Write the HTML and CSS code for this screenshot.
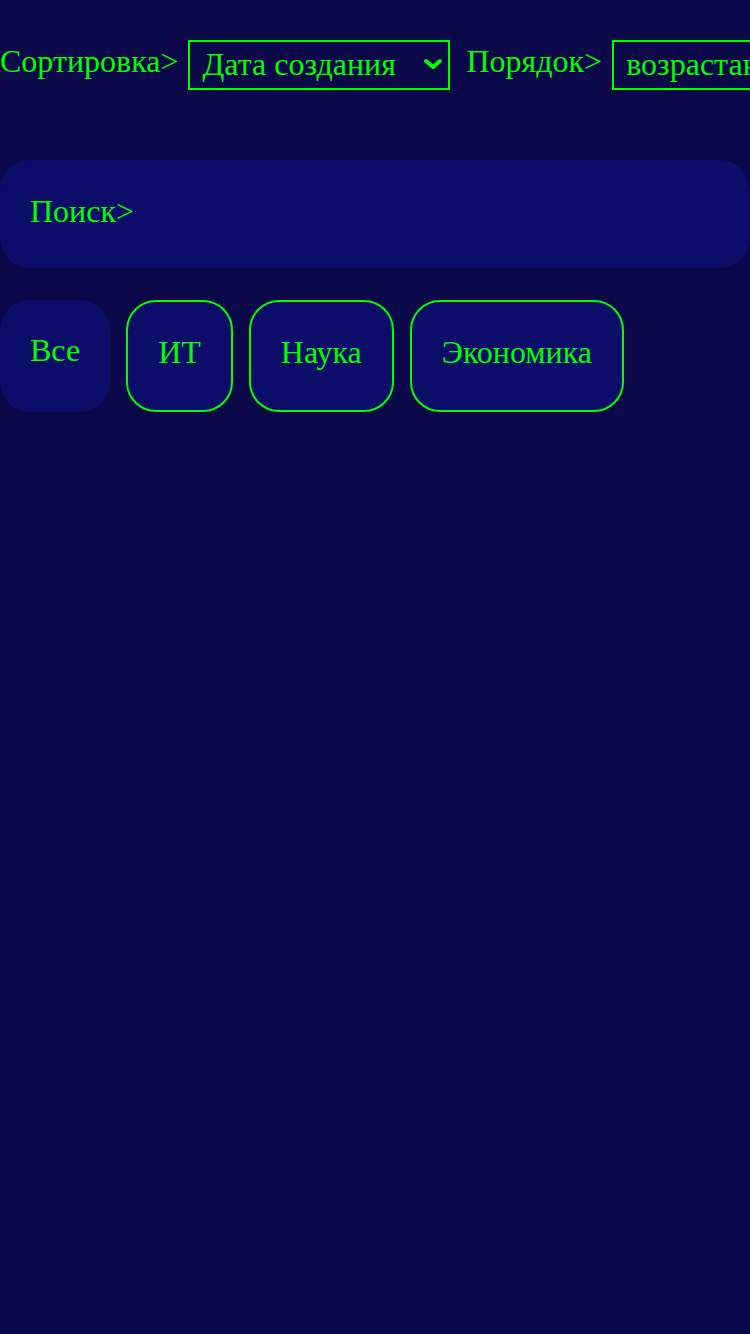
FILE: index.html
```html
<!DOCTYPE html>
<html lang="ru">
<head>
<meta charset="utf-8">
<title>Фильтр</title>
<link rel="stylesheet" href="styles.css">
</head>
<body>
<div class="page">
  <div class="toolbar">
    <label class="label">Сортировка&gt;</label>
    <div class="select-wrap sort">
      <select class="select">
        <option>Дата создания</option>
        <option>Название</option>
      </select>
      <svg class="chevron" width="20" height="12" viewBox="0 0 20 12" aria-hidden="true">
        <path d="M3 3 L10 9 L17 3" fill="none" stroke="#0f0" stroke-width="4" stroke-linecap="round" stroke-linejoin="round"/>
      </svg>
    </div>
    <label class="label">Порядок&gt;</label>
    <div class="select-wrap order">
      <select class="select">
        <option>возрастанию</option>
        <option>убыванию</option>
      </select>
      <svg class="chevron" width="20" height="12" viewBox="0 0 20 12" aria-hidden="true">
        <path d="M3 3 L10 9 L17 3" fill="none" stroke="#0f0" stroke-width="4" stroke-linecap="round" stroke-linejoin="round"/>
      </svg>
    </div>
  </div>
  <div class="search">
    <input class="search-input" type="text" placeholder="Поиск&gt;">
  </div>
  <div class="chips">
    <button class="chip active">Все</button>
    <button class="chip">ИТ</button>
    <button class="chip">Наука</button>
    <button class="chip">Экономика</button>
  </div>
</div>
</body>
</html>
```
FILE: styles.css
```css
html, body {
  margin: 0;
  padding: 0;
  background: #0a0848;
  overflow: hidden;
}
body {
  font-family: "Liberation Serif", "Times New Roman", serif;
  color: #0f0;
  width: 750px;
  height: 1334px;
}
.page {
  padding-top: 40px;
}
.toolbar {
  display: flex;
  align-items: flex-start;
  flex-wrap: nowrap;
  white-space: nowrap;
  height: 50px;
  width: 750px;
  overflow: hidden;
}
.label {
  font-size: 32px;
  line-height: 42px;
  margin-right: 10px;
  flex: none;
}
.select-wrap {
  position: relative;
  flex: none;
  margin-right: 16px;
}
.select-wrap.sort {
  width: 262px;
}
.select-wrap.order {
  width: 240px;
}
.select {
  -webkit-appearance: none;
  appearance: none;
  box-sizing: border-box;
  display: block;
  width: 100%;
  font-family: "Liberation Serif", "Times New Roman", serif;
  font-size: 32px;
  color: #0f0;
  background: transparent;
  border: 2px solid #0f0;
  border-radius: 0;
  height: 50px;
  padding: 0 36px 3px 12px;
  outline: none;
}
.select option {
  background: #0a0848;
  color: #0f0;
}
.chevron {
  position: absolute;
  right: 7px;
  top: 18px;
  pointer-events: none;
}
.search {
  margin-top: 70px;
}
.search-input {
  display: block;
  box-sizing: border-box;
  width: 750px;
  height: 108px;
  border: none;
  border-radius: 30px;
  background: #0c0c69;
  padding: 0 30px 6px;
  font-family: "Liberation Serif", "Times New Roman", serif;
  font-size: 32px;
  color: #0f0;
  outline: none;
}
.search-input::placeholder {
  color: #0f0;
  opacity: 1;
}
.chips {
  display: flex;
  gap: 16px;
  margin-top: 32px;
}
.chip {
  box-sizing: border-box;
  height: 112px;
  padding: 0 30px 8px;
  border: 2px solid #0f0;
  border-radius: 30px;
  background: #0c0c69;
  color: #0f0;
  font-family: "Liberation Serif", "Times New Roman", serif;
  font-size: 32px;
  cursor: pointer;
}
.chip.active {
  border-color: transparent;
  border-width: 0;
  padding: 0 30px 12px;
}
```
